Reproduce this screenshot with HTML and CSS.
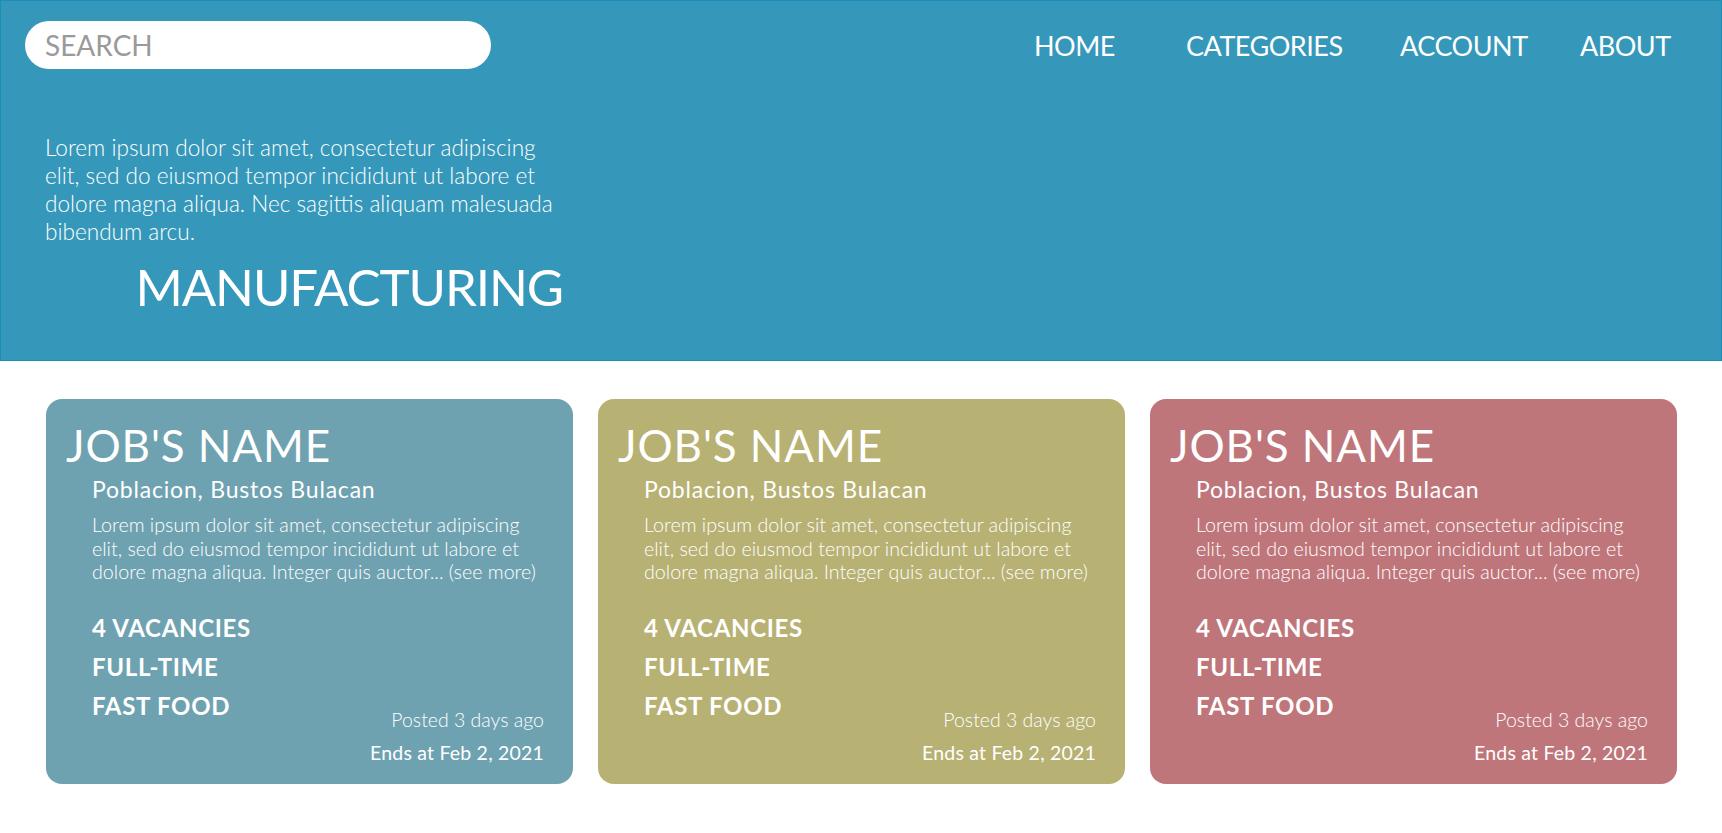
FILE: index.html
```html
<!DOCTYPE html>
<html lang="en">
<head>
<meta charset="utf-8">
<title>Manufacturing Jobs</title>
<link rel="stylesheet" href="styles.css">
</head>
<body>
<header class="hero">
  <div class="topbar">
    <div class="search">SEARCH</div>
    <nav class="nav">
      <a class="nav-link nav-home">HOME</a>
      <a class="nav-link nav-cat">CATEGORIES</a>
      <a class="nav-link nav-acc">ACCOUNT</a>
      <a class="nav-link nav-about">ABOUT</a>
    </nav>
  </div>
  <div class="intro">
    <p class="intro-text">Lorem ipsum dolor sit amet, consectetur adipiscing<br>elit, sed do eiusmod tempor incididunt ut labore et<br>dolore magna aliqua. Nec sagittis aliquam malesuada<br>bibendum arcu.</p>
    <h1 class="intro-title">MANUFACTURING</h1>
  </div>
</header>
<main class="jobs">
  <article class="job job-blue">
    <h2 class="job-title">JOB'S NAME</h2>
    <div class="job-body">
      <p class="job-location">Poblacion, Bustos Bulacan</p>
      <p class="job-desc">Lorem ipsum dolor sit amet, consectetur adipiscing<br>elit, sed do eiusmod tempor incididunt ut labore et<br>dolore magna aliqua. Integer quis auctor... (see more)</p>
      <div class="job-bottom">
        <ul class="job-tags"><li>4 VACANCIES</li><li>FULL-TIME</li><li>FAST FOOD</li></ul>
        <div class="job-dates"><span class="posted">Posted 3 days ago</span><span class="ends">Ends at Feb 2, 2021</span></div>
      </div>
    </div>
  </article>
  <article class="job job-olive">
    <h2 class="job-title">JOB'S NAME</h2>
    <div class="job-body">
      <p class="job-location">Poblacion, Bustos Bulacan</p>
      <p class="job-desc">Lorem ipsum dolor sit amet, consectetur adipiscing<br>elit, sed do eiusmod tempor incididunt ut labore et<br>dolore magna aliqua. Integer quis auctor... (see more)</p>
      <div class="job-bottom">
        <ul class="job-tags"><li>4 VACANCIES</li><li>FULL-TIME</li><li>FAST FOOD</li></ul>
        <div class="job-dates"><span class="posted">Posted 3 days ago</span><span class="ends">Ends at Feb 2, 2021</span></div>
      </div>
    </div>
  </article>
  <article class="job job-rose">
    <h2 class="job-title">JOB'S NAME</h2>
    <div class="job-body">
      <p class="job-location">Poblacion, Bustos Bulacan</p>
      <p class="job-desc">Lorem ipsum dolor sit amet, consectetur adipiscing<br>elit, sed do eiusmod tempor incididunt ut labore et<br>dolore magna aliqua. Integer quis auctor... (see more)</p>
      <div class="job-bottom">
        <ul class="job-tags"><li>4 VACANCIES</li><li>FULL-TIME</li><li>FAST FOOD</li></ul>
        <div class="job-dates"><span class="posted">Posted 3 days ago</span><span class="ends">Ends at Feb 2, 2021</span></div>
      </div>
    </div>
  </article>
</main>
</body>
</html>
```

FILE: styles.css
```css
* { box-sizing: border-box; }
html, body { margin: 0; padding: 0; background: #ffffff; }
body {
  font-family: "Lato", "Open Sans", sans-serif;
  color: #ffffff;
  width: 1722px;
  height: 833px;
  overflow: hidden;
}
.hero {
  height: 361px;
  background: #3598ba;
  border: 1px solid #1a8db8;
}
.topbar {
  display: flex;
  align-items: center;
  padding: 20px 0 0 24px;
}
.search {
  width: 466px;
  height: 48px;
  border-radius: 24px;
  background: #ffffff;
  color: #9a9a9a;
  font-size: 28px;
  line-height: 48px;
  padding-left: 20px;
}
.nav {
  display: flex;
  margin-left: 543px;
}
.nav-link {
  font-size: 27px;
  letter-spacing: -0.5px;
  color: #ffffff;
  text-decoration: none;
}
.nav-home { width: 152px; }
.nav-cat { width: 214px; }
.nav-acc { width: 180px; }
.intro {
  width: 530px;
  margin: 65px 0 0 44px;
}
.intro-text {
  margin: 0;
  font-size: 22.6px;
  line-height: 28px;
  font-weight: 300;
  white-space: nowrap;
}
.intro-title {
  margin: 11px 0 0 0;
  font-size: 51px;
  line-height: 60px;
  font-weight: 400;
  letter-spacing: -1.1px;
  text-align: right;
  padding-right: 12px;
}
.jobs {
  display: flex;
  gap: 25px;
  padding: 38px 0 0 46px;
}
.job {
  width: 527px;
  height: 385px;
  border-radius: 16px;
  padding: 20px 29px 15px 20px;
  display: flex;
  flex-direction: column;
}
.job-blue { background: #6fa2b1; }
.job-olive { background: #b8b174; }
.job-rose { background: #bf767b; }
.job-title {
  margin: 0;
  font-size: 44px;
  line-height: 52px;
  font-weight: 400;
  letter-spacing: 0.9px;
}
.job-body {
  padding-left: 26px;
  display: flex;
  flex-direction: column;
  flex: 1;
}
.job-location {
  margin: 4px 0 0 0;
  font-size: 23px;
  line-height: 28px;
  letter-spacing: 0.8px;
}
.job-desc {
  margin: 10px 0 0 0;
  font-size: 19.7px;
  line-height: 23.5px;
  font-weight: 300;
  white-space: nowrap;
}
.job-bottom {
  margin-top: 24px;
  display: flex;
  justify-content: space-between;
  align-items: flex-end;
  flex: 1;
}
.job-tags {
  list-style: none;
  margin: 0;
  padding: 0;
  align-self: flex-start;
  font-size: 24px;
  line-height: 39px;
  font-weight: 700;
  letter-spacing: 0.7px;
}
.job-dates {
  display: flex;
  flex-direction: column;
  align-items: flex-end;
  font-size: 19.5px;
  line-height: 33px;
}
.posted { font-weight: 300; }
.ends { font-weight: 400; letter-spacing: 0.2px; }
```
